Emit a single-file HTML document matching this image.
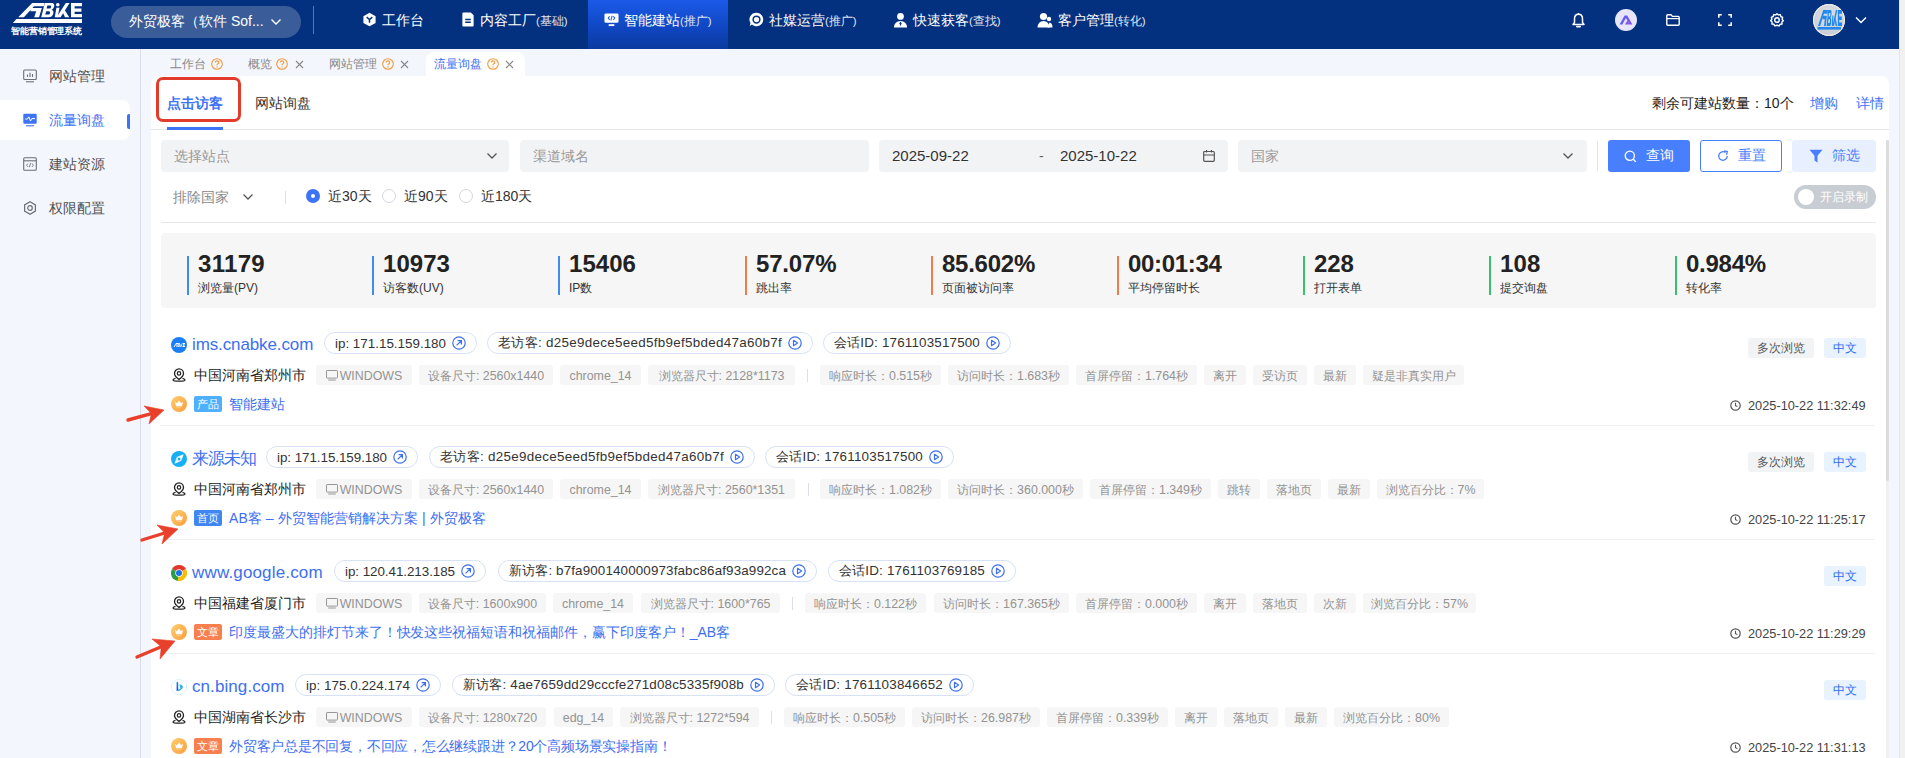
<!DOCTYPE html><html><head><meta charset='utf-8'><style>
*{box-sizing:border-box;margin:0;padding:0}
html,body{width:1905px;height:758px;overflow:hidden;background:#f3f6fd;font-family:"Liberation Sans", sans-serif;}
.ab{position:absolute;white-space:nowrap}
.hdr{position:absolute;left:0;top:0;width:1899px;height:49px;background:#03317f}
.sb{position:absolute;left:0;top:49px;width:141px;height:709px;background:#f3f6fd;border-right:1px solid #d9dce9}
.card{position:absolute;left:151px;top:76px;width:1738px;height:700px;background:#fff;border-radius:8px 8px 0 0}
.tc{display:flex;align-items:center;justify-content:center}
.tag{position:absolute;height:20px;padding-top:2px;background:#f6f6f6;border-radius:3px;color:#939393;font-size:12.4px;display:flex;align-items:center;justify-content:center;white-space:nowrap}
.chip{position:absolute;height:22px;border:1px solid #d8e2f6;border-radius:11px;color:#333;font-size:13.4px;display:flex;align-items:center;white-space:nowrap;padding-left:10px}
.dv{position:absolute;width:1px;background:#dcdfe6}
</style></head><body>
<div class='hdr'></div>
<svg class='ab' style='left:0;top:0' width='90' height='40' viewBox='0 0 90 40'>
<g fill='#fff'>
<path d='M18.2 17.2 L32.2 2.9 L44.6 2.9 L43.7 6.2 L34 6.2 L23.9 17.2 Z'/>
<path d='M31.5 8 L41.9 8 L39 17.2 L34.2 17.2 L36.2 11.2 L30.2 11.2 Z'/>
<path fill-rule='evenodd' d='M44.8 2.9 L51.5 2.9 C54.5 2.9 54.8 5.5 53.8 7.5 C53.3 8.6 52.6 9.4 51.6 9.8 C53.6 10.4 53.8 12.6 53 14.5 C52 16.6 50.6 17.2 48.5 17.2 L41.2 17.2 Z M47.4 5.6 L46.6 8.6 L50 8.6 C51.3 8.6 51.6 5.6 50.3 5.6 Z M46.3 11.2 L45.2 14.6 L48.7 14.6 C50.2 14.6 50.6 11.2 49 11.2 Z'/>
<circle cx='57.8' cy='4.7' r='1.8'/>
<path d='M56.4 7.8 L59.5 7.8 L57.6 17.2 L54.8 17.2 Z'/>
<path d='M65.8 2.9 L69.6 2.9 L60.6 17.2 L56.6 17.2 Z'/>
<path d='M62.6 12 L64.4 9.6 L69.2 17.2 L65 17.2 Z'/>
<path d='M71 2.9 L82 2.9 L82 6.3 L74.6 6.3 L74.6 8.6 L81.4 8.6 L81.4 11.8 L74.6 11.8 L74.6 14 L82 14 L82 17.2 L71 17.2 Z'/>
<path d='M16.4 19 L82 19 L82 23 L12.9 23 Z'/>
</g>
<text x='10.8' y='34.4' fill='#fff' font-size='9' font-weight='bold' font-family='Liberation Sans, sans-serif' textLength='71.5' lengthAdjust='spacingAndGlyphs'>智能营销管理系统</text>
</svg>
<div class='ab tc' style='left:111px;top:6px;width:190px;height:32px;border-radius:16px;background:#3a5c99;color:#fff;font-size:14px;justify-content:flex-start;padding-left:18px'>外贸极客（软件 Sof...<svg style='margin-left:6px' width='12' height='8' viewBox='0 0 12 8'><path d='M1.5 1.5 L6 6 L10.5 1.5' stroke='#fff' stroke-width='1.4' fill='none'/></svg></div>
<div class='ab' style='left:313px;top:6px;width:1px;height:28px;background:#5a77aa'></div>
<div class='ab' style='left:588px;top:0;width:140px;height:49px;background:linear-gradient(180deg,#1b5ae8 0%,#0f45bf 60%,#0a3a9e 100%)'></div>
<div class='ab' style='left:362px;top:12px;height:16px;display:flex;align-items:center;color:#fff;font-size:14px'><span style='position:relative;top:-0.5px;line-height:0'><svg width='15' height='15' viewBox='0 0 16 16'><path d='M8 0.8 L14.5 4.4 V11.6 L8 15.2 L1.5 11.6 V4.4 Z' fill='#fff'/><path d='M5 5.5 L8 8 L11 5.5 M8 8 V11.5' stroke='#03317f' stroke-width='1.6' fill='none'/></svg></span><span style='margin-left:5px;position:relative;top:1px'>工作台</span><span style='font-size:11.5px;color:#e0e6f2;position:relative;top:1px'></span></div>
<div class='ab' style='left:461px;top:12px;height:16px;display:flex;align-items:center;color:#fff;font-size:14px'><span style='position:relative;top:-0.5px;line-height:0'><svg width='14' height='15' viewBox='0 0 14 16'><path d='M1 1.5 Q1 0.5 2 0.5 H10 L13 3.5 V14.5 Q13 15.5 12 15.5 H2 Q1 15.5 1 14.5 Z' fill='#fff'/><path d='M4 8 H10 M4 11 H10' stroke='#03317f' stroke-width='1.5'/></svg></span><span style='margin-left:5px;position:relative;top:1px'>内容工厂</span><span style='font-size:11.5px;color:#e0e6f2;position:relative;top:1px'>(基础)</span></div>
<div class='ab' style='left:604px;top:12px;height:16px;display:flex;align-items:center;color:#fff;font-size:14px'><span style='position:relative;top:-0.5px;line-height:0'><svg width='15' height='15' viewBox='0 0 16 16'><rect x='0.5' y='1.5' width='15' height='10' rx='1.5' fill='#fff'/><rect x='5' y='13' width='6' height='2' fill='#fff'/><path d='M6 4.5 L4.5 6.5 L6 8.5 M10 4.5 L11.5 6.5 L10 8.5 M8.7 4 L7.3 9' stroke='#1a55e0' stroke-width='1.1' fill='none'/></svg></span><span style='margin-left:5px;position:relative;top:1px'>智能建站</span><span style='font-size:11.5px;color:#e0e6f2;position:relative;top:1px'>(推广)</span></div>
<div class='ab' style='left:749px;top:12px;height:16px;display:flex;align-items:center;color:#fff;font-size:14px'><span style='position:relative;top:-0.5px;line-height:0'><svg width='15' height='15' viewBox='0 0 16 16'><path d='M8 0.8 A7.2 7.2 0 1 1 3.2 13.4 L0.8 15 L1.6 11.8 A7.2 7.2 0 0 1 8 0.8 Z' fill='#fff'/><circle cx='8' cy='8' r='3.6' fill='none' stroke='#03317f' stroke-width='1.6'/></svg></span><span style='margin-left:5px;position:relative;top:1px'>社媒运营</span><span style='font-size:11.5px;color:#e0e6f2;position:relative;top:1px'>(推广)</span></div>
<div class='ab' style='left:893px;top:12px;height:16px;display:flex;align-items:center;color:#fff;font-size:14px'><span style='position:relative;top:-0.5px;line-height:0'><svg width='15' height='16' viewBox='0 0 16 16'><circle cx='8' cy='4.2' r='3.6' fill='#fff'/><path d='M1 16 Q1.5 9 8 9 Q14.5 9 15 16 Z' fill='#fff'/><path d='M8 9.5 L7 11.5 L8 15 L9 11.5 Z' fill='#03317f'/></svg></span><span style='margin-left:5px;position:relative;top:1px'>快速获客</span><span style='font-size:11.5px;color:#e0e6f2;position:relative;top:1px'>(查找)</span></div>
<div class='ab' style='left:1037px;top:12px;height:16px;display:flex;align-items:center;color:#fff;font-size:14px'><span style='position:relative;top:-0.5px;line-height:0'><svg width='16' height='16' viewBox='0 0 16 16'><circle cx='6.5' cy='4.5' r='3.6' fill='#fff'/><path d='M0.5 15.5 Q1 9 6.5 9 Q12 9 12.5 15.5 Z' fill='#fff'/><circle cx='12' cy='7' r='2.2' fill='#fff'/><path d='M10.5 15.5 L15.5 15.5 Q15.5 11 12.5 10.5 Z' fill='#fff'/></svg></span><span style='margin-left:5px;position:relative;top:1px'>客户管理</span><span style='font-size:11.5px;color:#e0e6f2;position:relative;top:1px'>(转化)</span></div>
<svg class='ab' style='left:1571px;top:12px' width='15' height='16' viewBox='0 0 15 16'><path d='M7.5 2.2 C5 2.2 3.5 4.2 3.5 6.8 V10.6 L2 12.4 H13 L11.5 10.6 V6.8 C11.5 4.2 10 2.2 7.5 2.2 Z' fill='none' stroke='#fff' stroke-width='1.5' stroke-linejoin='round'/><path d='M7.5 1 V2.2' stroke='#fff' stroke-width='1.4'/><path d='M5.8 14.6 H9.2' stroke='#fff' stroke-width='1.6' stroke-linecap='round'/></svg>
<div class='ab' style='left:1615px;top:9px;width:22px;height:22px;border-radius:11px;background:#e8e4fa'></div>
<svg class='ab' style='left:1615px;top:9px' width='22' height='22' viewBox='0 0 22 22'><defs><linearGradient id='aig' x1='0' y1='0' x2='1' y2='0'><stop offset='0' stop-color='#4f63f2'/><stop offset='1' stop-color='#8a52ec'/></linearGradient></defs><path d='M4.6 15.4 L9.6 6.6 L12.2 6.6 L17.4 15.4 L14.6 15.4 L10.9 9 L7.3 15.4 Z' fill='url(#aig)'/><path d='M10 15.4 L12.4 11.4 L14.6 15.4 Z' fill='#7c55ee'/></svg>
<svg class='ab' style='left:1666px;top:14px' width='14' height='12' viewBox='0 0 14 12'><path d='M0.8 1.8 Q0.8 0.8 1.8 0.8 H5 L6.4 2.4 H12.2 Q13.2 2.4 13.2 3.4 V10.2 Q13.2 11.2 12.2 11.2 H1.8 Q0.8 11.2 0.8 10.2 Z' fill='none' stroke='#fff' stroke-width='1.4' stroke-linejoin='round'/><path d='M0.8 4.6 H13.2' stroke='#fff' stroke-width='1.2'/></svg>
<svg class='ab' style='left:1718px;top:14px' width='14' height='12' viewBox='0 0 14 12'><path d='M0.8 3.8 V0.8 H3.8 M10.2 0.8 H13.2 V3.8 M13.2 8.2 V11.2 H10.2 M3.8 11.2 H0.8 V8.2' fill='none' stroke='#fff' stroke-width='1.5'/></svg>
<svg class='ab' style='left:1770px;top:13px' width='14' height='14' viewBox='0 0 16 16'><path d='M8 0.8 L9.6 2.2 L11.8 1.8 L12.4 4 L14.5 5 L13.8 7.1 L15.2 8.8 L13.6 10.3 L13.8 12.6 L11.6 12.9 L10.4 14.8 L8 14 L5.6 14.8 L4.4 12.9 L2.2 12.6 L2.4 10.3 L0.8 8.8 L2.2 7.1 L1.5 5 L3.6 4 L4.2 1.8 L6.4 2.2 Z' fill='none' stroke='#fff' stroke-width='1.6' stroke-linejoin='round'/><circle cx='8' cy='8' r='2.6' fill='none' stroke='#fff' stroke-width='1.7'/></svg>
<div class='ab' style='left:1813px;top:4px;width:32px;height:32px;border-radius:16px;background:radial-gradient(circle at 50% 40%,#dfe1e5 0%,#ccd0d6 65%,#b4b8bf 100%);box-shadow:inset 0 0 0 1.2px #efeceb;overflow:hidden'><svg width='32' height='32' viewBox='0 0 32 32'><g fill='#2188f0' transform='translate(-1.84 2.75) scale(0.376 1.12)'><path d='M18.2 17.2 L32.2 2.9 L44.6 2.9 L43.7 6.2 L34 6.2 L23.9 17.2 Z'/>
<path d='M31.5 8 L41.9 8 L39 17.2 L34.2 17.2 L36.2 11.2 L30.2 11.2 Z'/>
<path fill-rule='evenodd' d='M44.8 2.9 L51.5 2.9 C54.5 2.9 54.8 5.5 53.8 7.5 C53.3 8.6 52.6 9.4 51.6 9.8 C53.6 10.4 53.8 12.6 53 14.5 C52 16.6 50.6 17.2 48.5 17.2 L41.2 17.2 Z M47.4 5.6 L46.6 8.6 L50 8.6 C51.3 8.6 51.6 5.6 50.3 5.6 Z M46.3 11.2 L45.2 14.6 L48.7 14.6 C50.2 14.6 50.6 11.2 49 11.2 Z'/>
<path d='M56.4 7.8 L59.5 7.8 L57.6 17.2 L54.8 17.2 Z'/>
<path d='M65.8 2.9 L69.6 2.9 L60.6 17.2 L56.6 17.2 Z'/>
<path d='M62.6 12 L64.4 9.6 L69.2 17.2 L65 17.2 Z'/>
<path d='M71 2.9 L82 2.9 L82 6.3 L74.6 6.3 L74.6 8.6 L81.4 8.6 L81.4 11.8 L74.6 11.8 L74.6 14 L82 14 L82 17.2 L71 17.2 Z'/></g><rect x='4.5' y='23' width='23.5' height='2.6' fill='#2188f0'/></svg></div>
<svg class='ab' style='left:1855px;top:16px' width='12' height='8' viewBox='0 0 12 8'><path d='M1 1.5 L6 6.5 L11 1.5' stroke='#fff' stroke-width='1.5' fill='none'/></svg>
<div class='ab' style='left:1899px;top:0;width:6px;height:758px;background:#f1f1f1;border-left:1px solid #e6e6e6'></div>
<div class='sb'></div>
<div class='ab' style='left:0;top:100px;width:130px;height:40px;background:#fff;border-radius:0 8px 8px 0'></div>
<div class='ab' style='left:127px;top:114px;width:3px;height:15px;background:#3d73f5;border-radius:2px 0 0 2px'></div>
<div class='ab' style='left:23px;top:69px;height:14px'><svg width='14' height='14' viewBox='0 0 14 14'><rect x='0.7' y='1' width='12.6' height='9.5' rx='1' fill='none' stroke='#6b6f78' stroke-width='1.1'/><path d='M3 12.8 H11' stroke='#6b6f78' stroke-width='1.1'/><path d='M4.5 8 V5.5 M7 8 V3.8 M9.5 8 V5' stroke='#6b6f78' stroke-width='1.1'/></svg></div>
<div class='ab' style='left:49px;top:66px;height:20px;line-height:20px;font-size:14px;color:#505050'>网站管理</div>
<div class='ab' style='left:23px;top:113px;height:14px'><svg width='14' height='14' viewBox='0 0 14 14'><rect x='0.3' y='0.8' width='13.4' height='10' rx='1' fill='#3d73f5'/><path d='M2 6 H4.5 L5.8 3.8 L7.5 8 L8.8 5.6 H12' stroke='#fff' stroke-width='1' fill='none'/><path d='M3 12.8 H11' stroke='#3d73f5' stroke-width='1.1'/></svg></div>
<div class='ab' style='left:49px;top:110px;height:20px;line-height:20px;font-size:14px;color:#3d73f5'>流量询盘</div>
<div class='ab' style='left:23px;top:157px;height:14px'><svg width='14' height='14' viewBox='0 0 14 14'><rect x='0.7' y='0.7' width='12.6' height='12.6' rx='1' fill='none' stroke='#6b6f78' stroke-width='1.1'/><path d='M0.7 3.8 H13.3' stroke='#6b6f78' stroke-width='1.1'/><path d='M5 6.5 L3.6 8.2 L5 9.9 M9 6.5 L10.4 8.2 L9 9.9 M7.6 6.2 L6.4 10.2' stroke='#6b6f78' stroke-width='0.9' fill='none'/></svg></div>
<div class='ab' style='left:49px;top:154px;height:20px;line-height:20px;font-size:14px;color:#505050'>建站资源</div>
<div class='ab' style='left:23px;top:201px;height:14px'><svg width='14' height='14' viewBox='0 0 14 14'><path d='M7 0.8 L12.4 3.9 V10.1 L7 13.2 L1.6 10.1 V3.9 Z' fill='none' stroke='#6b6f78' stroke-width='1.2'/><circle cx='7' cy='7' r='2.3' fill='none' stroke='#6b6f78' stroke-width='1.2'/></svg></div>
<div class='ab' style='left:49px;top:198px;height:20px;line-height:20px;font-size:14px;color:#505050'>权限配置</div>
<div class='ab' style='left:426px;top:52px;width:99px;height:26px;background:#fff;border-radius:8px 8px 0 0'></div>
<div class='ab' style='left:170px;top:56px;height:16px;line-height:16px;font-size:12px;color:#888'>工作台</div>
<svg class='ab' style='left:211px;top:58px' width='12' height='12' viewBox='0 0 12 12'><circle cx='6' cy='6' r='5.3' fill='none' stroke='#f39a3c' stroke-width='1.1'/><path d='M4.3 4.6 Q4.3 2.9 6 2.9 Q7.7 2.9 7.7 4.4 Q7.7 5.4 6.6 5.9 Q6 6.2 6 7.2' fill='none' stroke='#f39a3c' stroke-width='1.1'/><circle cx='6' cy='8.9' r='0.7' fill='#f39a3c'/></svg>
<div class='ab' style='left:248px;top:56px;height:16px;line-height:16px;font-size:12px;color:#888'>概览</div>
<svg class='ab' style='left:276px;top:58px' width='12' height='12' viewBox='0 0 12 12'><circle cx='6' cy='6' r='5.3' fill='none' stroke='#f39a3c' stroke-width='1.1'/><path d='M4.3 4.6 Q4.3 2.9 6 2.9 Q7.7 2.9 7.7 4.4 Q7.7 5.4 6.6 5.9 Q6 6.2 6 7.2' fill='none' stroke='#f39a3c' stroke-width='1.1'/><circle cx='6' cy='8.9' r='0.7' fill='#f39a3c'/></svg>
<svg class='ab' style='left:295px;top:60px' width='9' height='9' viewBox='0 0 9 9'><path d='M1 1 L8 8 M8 1 L1 8' stroke='#888' stroke-width='1.1'/></svg>
<div class='ab' style='left:329px;top:56px;height:16px;line-height:16px;font-size:12px;color:#888'>网站管理</div>
<svg class='ab' style='left:382px;top:58px' width='12' height='12' viewBox='0 0 12 12'><circle cx='6' cy='6' r='5.3' fill='none' stroke='#f39a3c' stroke-width='1.1'/><path d='M4.3 4.6 Q4.3 2.9 6 2.9 Q7.7 2.9 7.7 4.4 Q7.7 5.4 6.6 5.9 Q6 6.2 6 7.2' fill='none' stroke='#f39a3c' stroke-width='1.1'/><circle cx='6' cy='8.9' r='0.7' fill='#f39a3c'/></svg>
<svg class='ab' style='left:400px;top:60px' width='9' height='9' viewBox='0 0 9 9'><path d='M1 1 L8 8 M8 1 L1 8' stroke='#888' stroke-width='1.1'/></svg>
<div class='ab' style='left:434px;top:56px;height:16px;line-height:16px;font-size:12px;color:#3d73f5'>流量询盘</div>
<svg class='ab' style='left:487px;top:58px' width='12' height='12' viewBox='0 0 12 12'><circle cx='6' cy='6' r='5.3' fill='none' stroke='#f39a3c' stroke-width='1.1'/><path d='M4.3 4.6 Q4.3 2.9 6 2.9 Q7.7 2.9 7.7 4.4 Q7.7 5.4 6.6 5.9 Q6 6.2 6 7.2' fill='none' stroke='#f39a3c' stroke-width='1.1'/><circle cx='6' cy='8.9' r='0.7' fill='#f39a3c'/></svg>
<svg class='ab' style='left:505px;top:60px' width='9' height='9' viewBox='0 0 9 9'><path d='M1 1 L8 8 M8 1 L1 8' stroke='#888' stroke-width='1.1'/></svg>
<div class='card'></div>
<div class='ab' style='left:156px;top:77px;width:85px;height:45px;border:3px solid #e33b2b;border-radius:7px'></div>
<div class='ab' style='left:167px;top:93px;height:20px;line-height:20px;font-size:14px;color:#3d73f5;font-weight:bold'>点击访客</div>
<div class='ab' style='left:255px;top:93px;height:20px;line-height:20px;font-size:14px;color:#333'>网站询盘</div>
<div class='ab' style='left:151px;top:129px;width:1738px;height:1px;background:#e6e8ee'></div>
<div class='ab' style='left:167px;top:127px;width:56px;height:3px;background:#3d73f5'></div>
<div class='ab' style='left:1652px;top:93px;height:20px;line-height:20px;font-size:14px;color:#222'>剩余可建站数量：10个</div>
<div class='ab' style='left:1810px;top:93px;height:20px;line-height:20px;font-size:14px;color:#3d73f5'>增购</div>
<div class='ab' style='left:1856px;top:93px;height:20px;line-height:20px;font-size:14px;color:#3d73f5'>详情</div>
<div class='ab' style='left:161px;top:140px;width:348px;height:32px;background:#f2f3f5;border-radius:4px'></div>
<div class='ab' style='left:174px;top:146px;height:20px;line-height:20px;font-size:14px;color:#999'>选择站点</div>
<div class='ab' style='left:486px;top:152px;height:8px;line-height:0'><svg width='12' height='8' viewBox='0 0 12 8'><path d='M1.5 1.5 L6 6 L10.5 1.5' stroke='#555' stroke-width='1.3' fill='none'/></svg></div>
<div class='ab' style='left:520px;top:140px;width:349px;height:32px;background:#f2f3f5;border-radius:4px'></div>
<div class='ab' style='left:533px;top:146px;height:20px;line-height:20px;font-size:14px;color:#999'>渠道域名</div>
<div class='ab' style='left:879px;top:140px;width:349px;height:32px;background:#f2f3f5;border-radius:4px'></div>
<div class='ab' style='left:892px;top:146px;height:20px;line-height:20px;font-size:15px;color:#333'>2025-09-22</div>
<div class='ab' style='left:1039px;top:146px;height:20px;line-height:20px;font-size:14px;color:#666'>-</div>
<div class='ab' style='left:1060px;top:146px;height:20px;line-height:20px;font-size:15px;color:#333'>2025-10-22</div>
<svg class='ab' style='left:1203px;top:150px' width='12' height='12' viewBox='0 0 12 12'><rect x='0.7' y='1.5' width='10.6' height='9.8' rx='1' fill='none' stroke='#555' stroke-width='1.2'/><path d='M0.7 5 H11.3 M3.5 0 V2.5 M8.5 0 V2.5' stroke='#555' stroke-width='1.2'/></svg>
<div class='ab' style='left:1238px;top:140px;width:349px;height:32px;background:#f2f3f5;border-radius:4px'></div>
<div class='ab' style='left:1251px;top:146px;height:20px;line-height:20px;font-size:14px;color:#999'>国家</div>
<div class='ab' style='left:1562px;top:152px;height:8px;line-height:0'><svg width='12' height='8' viewBox='0 0 12 8'><path d='M1.5 1.5 L6 6 L10.5 1.5' stroke='#555' stroke-width='1.3' fill='none'/></svg></div>
<div class='ab' style='left:1597px;top:141px;width:1px;height:30px;background:#e2e4ea'></div>
<div class='ab tc' style='left:1608px;top:140px;width:82px;height:32px;background:#487ffe;border-radius:3px;color:#fff;font-size:14px'><svg width='13' height='13' viewBox='0 0 13 13' style='margin-right:9px'><circle cx='5.8' cy='5.8' r='4.6' fill='none' stroke='#fff' stroke-width='1.3'/><path d='M9.2 9.2 L11.8 11.8' stroke='#fff' stroke-width='1.4'/></svg>查询</div>
<div class='ab tc' style='left:1700px;top:140px;width:82px;height:32px;background:#fff;border:1px solid #487ffe;border-radius:3px;color:#487ffe;font-size:14px'><svg width='12' height='12' viewBox='0 0 12 12' style='margin-right:9px'><path d='M10.3 6 A4.3 4.3 0 1 1 8.6 2.6' fill='none' stroke='#487ffe' stroke-width='1.3'/><path d='M7 0.8 L10.3 1.6 L9.5 4.8' fill='none' stroke='#487ffe' stroke-width='1.3'/></svg>重置</div>
<div class='ab tc' style='left:1792px;top:140px;width:84px;height:32px;background:#e8efff;border-radius:3px;color:#487ffe;font-size:14px'><svg width='14' height='14' viewBox='0 0 14 14' style='margin-right:9px'><path d='M0.5 0.8 H13.5 L8.5 6.8 V13.5 L5.5 11.5 V6.8 Z' fill='#487ffe'/></svg>筛选</div>
<div class='ab' style='left:173px;top:187px;height:20px;line-height:20px;font-size:14px;color:#888'>排除国家</div>
<div class='ab' style='left:242px;top:193px;height:8px;line-height:0'><svg width='12' height='8' viewBox='0 0 12 8'><path d='M1.5 1.5 L6 6 L10.5 1.5' stroke='#555' stroke-width='1.3' fill='none'/></svg></div>
<div class='ab' style='left:285px;top:191px;width:1px;height:13px;background:#dcdfe6'></div>
<div class='ab' style='left:306px;top:189px;width:14px;height:14px;border-radius:7px;background:#3d73f5'></div><div class='ab' style='left:311px;top:194px;width:4px;height:4px;border-radius:2px;background:#fff'></div>
<div class='ab' style='left:328px;top:186px;height:20px;line-height:20px;font-size:14px;color:#333'>近30天</div>
<div class='ab' style='left:382px;top:189px;width:14px;height:14px;border-radius:7px;border:1px solid #d4d7de'></div>
<div class='ab' style='left:404px;top:186px;height:20px;line-height:20px;font-size:14px;color:#333'>近90天</div>
<div class='ab' style='left:459px;top:189px;width:14px;height:14px;border-radius:7px;border:1px solid #d4d7de'></div>
<div class='ab' style='left:481px;top:186px;height:20px;line-height:20px;font-size:14px;color:#333'>近180天</div>
<div class='ab' style='left:1794px;top:185px;width:82px;height:24px;border-radius:12px;background:#c8ccd3'></div>
<div class='ab' style='left:1798px;top:189px;width:16px;height:16px;border-radius:8px;background:#fff'></div>
<div class='ab' style='left:1820px;top:187px;height:20px;line-height:20px;font-size:12px;color:#fff'>开启录制</div>
<div class='ab' style='left:161px;top:222px;width:1715px;height:1px;background:#e6e8ee'></div>
<div class='ab' style='left:1886px;top:140px;width:3px;height:618px;background:#f0f0f0'></div>
<div class='ab' style='left:1886px;top:140px;width:3px;height:341px;background:#dcdcdc;border-radius:2px'></div>
<div class='ab' style='left:161px;top:233px;width:1715px;height:75px;background:#f6f6f6;border-radius:4px'></div>
<div class='ab' style='left:187px;top:256px;width:2px;height:39px;background:#3f8cf0'></div>
<div class='ab' style='left:198px;top:250px;height:28px;line-height:28px;font-size:24px;font-weight:bold;color:#222'><span style='letter-spacing:0.316px;'>31179</span></div>
<div class='ab' style='left:198px;top:280px;height:16px;line-height:16px;font-size:12px;color:#333'>浏览量(PV)</div>
<div class='ab' style='left:372px;top:256px;width:2px;height:39px;background:#3f8cf0'></div>
<div class='ab' style='left:383px;top:250px;height:28px;line-height:28px;font-size:24px;font-weight:bold;color:#222'><span style='letter-spacing:0.030px;'>10973</span></div>
<div class='ab' style='left:383px;top:280px;height:16px;line-height:16px;font-size:12px;color:#333'>访客数(UV)</div>
<div class='ab' style='left:558px;top:256px;width:2px;height:39px;background:#3f8cf0'></div>
<div class='ab' style='left:569px;top:250px;height:28px;line-height:28px;font-size:24px;font-weight:bold;color:#222'><span style='letter-spacing:0.030px;'>15406</span></div>
<div class='ab' style='left:569px;top:280px;height:16px;line-height:16px;font-size:12px;color:#333'>IP数</div>
<div class='ab' style='left:745px;top:256px;width:2px;height:39px;background:#f07b4b'></div>
<div class='ab' style='left:756px;top:250px;height:28px;line-height:28px;font-size:24px;font-weight:bold;color:#222'><span style='letter-spacing:-0.184px;'>57.07%</span></div>
<div class='ab' style='left:756px;top:280px;height:16px;line-height:16px;font-size:12px;color:#333'>跳出率</div>
<div class='ab' style='left:931px;top:256px;width:2px;height:39px;background:#f07b4b'></div>
<div class='ab' style='left:942px;top:250px;height:28px;line-height:28px;font-size:24px;font-weight:bold;color:#222'><span style='letter-spacing:-0.250px;'>85.602%</span></div>
<div class='ab' style='left:942px;top:280px;height:16px;line-height:16px;font-size:12px;color:#333'>页面被访问率</div>
<div class='ab' style='left:1117px;top:256px;width:2px;height:39px;background:#f07b4b'></div>
<div class='ab' style='left:1128px;top:250px;height:28px;line-height:28px;font-size:24px;font-weight:bold;color:#222'><span style='letter-spacing:-0.310px;'>00:01:34</span></div>
<div class='ab' style='left:1128px;top:280px;height:16px;line-height:16px;font-size:12px;color:#333'>平均停留时长</div>
<div class='ab' style='left:1303px;top:256px;width:2px;height:39px;background:#39c06e'></div>
<div class='ab' style='left:1314px;top:250px;height:28px;line-height:28px;font-size:24px;font-weight:bold;color:#222'><span style='letter-spacing:-0.049px;'>228</span></div>
<div class='ab' style='left:1314px;top:280px;height:16px;line-height:16px;font-size:12px;color:#333'>打开表单</div>
<div class='ab' style='left:1489px;top:256px;width:2px;height:39px;background:#39c06e'></div>
<div class='ab' style='left:1500px;top:250px;height:28px;line-height:28px;font-size:24px;font-weight:bold;color:#222'><span style='letter-spacing:0.118px;'>108</span></div>
<div class='ab' style='left:1500px;top:280px;height:16px;line-height:16px;font-size:12px;color:#333'>提交询盘</div>
<div class='ab' style='left:1675px;top:256px;width:2px;height:39px;background:#39c06e'></div>
<div class='ab' style='left:1686px;top:250px;height:28px;line-height:28px;font-size:24px;font-weight:bold;color:#222'><span style='letter-spacing:-0.268px;'>0.984%</span></div>
<div class='ab' style='left:1686px;top:280px;height:16px;line-height:16px;font-size:12px;color:#333'>转化率</div>
<div class='ab' style='left:171px;top:337px;height:16px;line-height:0'><svg width='16' height='16' viewBox='0 0 16 16'><circle cx='8' cy='8' r='8' fill='#1a7ef5'/><g fill='#fff' transform='translate(-0.78 5.19) scale(0.18 0.28)'><path d='M18.2 17.2 L32.2 2.9 L44.6 2.9 L43.7 6.2 L34 6.2 L23.9 17.2 Z'/>
<path d='M31.5 8 L41.9 8 L39 17.2 L34.2 17.2 L36.2 11.2 L30.2 11.2 Z'/>
<path fill-rule='evenodd' d='M44.8 2.9 L51.5 2.9 C54.5 2.9 54.8 5.5 53.8 7.5 C53.3 8.6 52.6 9.4 51.6 9.8 C53.6 10.4 53.8 12.6 53 14.5 C52 16.6 50.6 17.2 48.5 17.2 L41.2 17.2 Z M47.4 5.6 L46.6 8.6 L50 8.6 C51.3 8.6 51.6 5.6 50.3 5.6 Z M46.3 11.2 L45.2 14.6 L48.7 14.6 C50.2 14.6 50.6 11.2 49 11.2 Z'/>
<path d='M56.4 7.8 L59.5 7.8 L57.6 17.2 L54.8 17.2 Z'/>
<path d='M65.8 2.9 L69.6 2.9 L60.6 17.2 L56.6 17.2 Z'/>
<path d='M62.6 12 L64.4 9.6 L69.2 17.2 L65 17.2 Z'/>
<path d='M71 2.9 L82 2.9 L82 6.3 L74.6 6.3 L74.6 8.6 L81.4 8.6 L81.4 11.8 L74.6 11.8 L74.6 14 L82 14 L82 17.2 L71 17.2 Z'/></g></svg></div>
<div class='ab' style='left:192px;top:333px;height:24px;line-height:24px;font-size:17px;color:#3d6ff0'><span style='letter-spacing:-0.116px;'>ims.cnabke.com</span></div>
<div class='chip' style='left:324px;top:332px;width:153px'><span style='letter-spacing:0.003px;'>ip: 171.15.159.180</span></div>
<svg class='ab' style='left:452px;top:336px' width='14' height='14' viewBox='0 0 14 14'><circle cx='7' cy='7' r='6.2' fill='none' stroke='#3d6ff0' stroke-width='1.2'/><path d='M4.6 9.4 L9.2 4.8 M5.6 4.6 H9.4 V8.4' fill='none' stroke='#3d6ff0' stroke-width='1.2'/></svg>
<div class='chip' style='left:487px;top:332px;width:326px'><span style='letter-spacing:0.302px;'>老访客: d25e9dece5eed5fb9ef5bded47a60b7f</span></div>
<svg class='ab' style='left:788px;top:336px' width='14' height='14' viewBox='0 0 14 14'><circle cx='7' cy='7' r='6.2' fill='none' stroke='#3d6ff0' stroke-width='1.2'/><path d='M5.5 4.3 L9.6 7 L5.5 9.7 Z' fill='none' stroke='#3d6ff0' stroke-width='1.2' stroke-linejoin='round'/></svg>
<div class='chip' style='left:823px;top:332px;width:188px'><span style='letter-spacing:0.176px;'>会话ID: 1761103517500</span></div>
<svg class='ab' style='left:986px;top:336px' width='14' height='14' viewBox='0 0 14 14'><circle cx='7' cy='7' r='6.2' fill='none' stroke='#3d6ff0' stroke-width='1.2'/><path d='M5.5 4.3 L9.6 7 L5.5 9.7 Z' fill='none' stroke='#3d6ff0' stroke-width='1.2' stroke-linejoin='round'/></svg>
<div class='ab' style='left:172px;top:368px;height:14px;line-height:0'><svg width='14' height='14' viewBox='0 0 14 14'><path d='M7 0.9 A4.5 4.5 0 0 1 11.5 5.4 C11.5 8 9 10 7 11.4 C5 10 2.5 8 2.5 5.4 A4.5 4.5 0 0 1 7 0.9 Z' fill='none' stroke='#222' stroke-width='1.3'/><circle cx='7' cy='5.4' r='1.7' fill='none' stroke='#222' stroke-width='1.2'/><path d='M3.5 10.3 C1.5 10.9 1 11.5 1 12 C1 12.8 3.8 13.2 7 13.2 C10.2 13.2 13 12.8 13 12 C13 11.5 12.5 10.9 10.5 10.3' fill='none' stroke='#222' stroke-width='1.3'/></svg></div>
<div class='ab' style='left:194px;top:365px;height:20px;line-height:20px;font-size:14px;color:#222'>中国河南省郑州市</div>
<div class='tag' style='left:316px;top:365px;width:96px'><svg width='12' height='11' viewBox='0 0 12 11' style='margin-right:2px;margin-top:-1px'><rect x='0.5' y='0.5' width='11' height='7.6' rx='0.6' fill='none' stroke='#8c8c8c' stroke-width='0.9'/><path d='M2.2 10 H9.8' stroke='#8c8c8c' stroke-width='0.9'/></svg>WINDOWS</div>
<div class='tag' style='left:419px;top:365px;width:134px'>设备尺寸: 2560x1440</div>
<div class='tag' style='left:560px;top:365px;width:81px'>chrome_14</div>
<div class='tag' style='left:648px;top:365px;width:147px'>浏览器尺寸: 2128*1173</div>
<div class='dv' style='left:807px;top:369px;height:13px'></div>
<div class='tag' style='left:820px;top:365px;width:121px'>响应时长：0.515秒</div>
<div class='tag' style='left:948px;top:365px;width:121px'>访问时长：1.683秒</div>
<div class='tag' style='left:1076px;top:365px;width:121px'>首屏停留：1.764秒</div>
<div class='tag' style='left:1204px;top:365px;width:42px'>离开</div>
<div class='tag' style='left:1253px;top:365px;width:54px'>受访页</div>
<div class='tag' style='left:1314px;top:365px;width:42px'>最新</div>
<div class='tag' style='left:1363px;top:365px;width:101px'>疑是非真实用户</div>
<div class='ab' style='left:171px;top:396px;height:16px;line-height:0'><svg width='16' height='16' viewBox='0 0 16 16'><defs><linearGradient id='cg' x1='0' y1='0' x2='1' y2='1'><stop offset='0' stop-color='#ffcf6e'/><stop offset='1' stop-color='#fb9b3a'/></linearGradient></defs><circle cx='8' cy='8' r='8' fill='url(#cg)'/><path d='M4 5.8 L6 7.3 L8 4.4 L10 7.3 L12 5.8 L11 10.3 H5 Z' fill='#fff'/><rect x='5.5' y='11.5' width='5' height='0.6' fill='#fff' opacity='0.5'/></svg></div>
<div class='ab tc' style='left:194px;top:396px;width:28px;height:16px;border-radius:2px;background:#4eb0fc;color:#fff;font-size:11px'>产品</div>
<div class='ab' style='left:229px;top:394px;height:20px;line-height:20px;font-size:14px;color:#3d6ff0'><span style='letter-spacing:0.100px;'>智能建站</span></div>
<div class='ab tc' style='left:1748px;top:338px;width:66px;height:20px;border-radius:3px;background:#f2f3f5;color:#555;font-size:12px'>多次浏览</div>
<div class='ab tc' style='left:1824px;top:338px;width:42px;height:20px;border-radius:3px;background:#e8f3ff;color:#2f6ef0;font-size:12px'>中文</div>
<div class='ab' style='left:1730px;top:400px;height:11px;line-height:0'><svg width='11' height='11' viewBox='0 0 11 11'><circle cx='5.5' cy='5.5' r='4.7' fill='none' stroke='#555' stroke-width='1.2'/><path d='M5.5 2.8 V5.7 L7.4 6.6' fill='none' stroke='#555' stroke-width='1.1'/></svg></div>
<div class='ab' style='left:1748px;top:397px;height:17px;line-height:17px;font-size:12.75px;color:#444'><span style='letter-spacing:0.008px;'>2025-10-22 11:32:49</span></div>
<div class='ab' style='left:160px;top:425px;width:1715px;height:1px;background:#eef0f3'></div>
<svg class='ab' style='left:0;top:0;overflow:visible' width='1' height='1'><path d='M128 420 L151.4 413.6' stroke='#e8402a' stroke-width='3.4' stroke-linecap='round'/><path d='M164 410 L144 406 L151.4 413.6 L149 424 Z' fill='#e8402a' stroke='#e8402a' stroke-width='0.6' stroke-linejoin='round'/></svg>
<div class='ab' style='left:171px;top:451px;height:16px;line-height:0'><svg width='16' height='16' viewBox='0 0 16 16'><circle cx='8' cy='8' r='8' fill='#17aff5'/><path d='M12.2 3.8 L10 9.6 L4 12.2 L6.1 6.2 Z' fill='#fff' stroke='#fff' stroke-width='0.6' stroke-linejoin='round'/><circle cx='8' cy='8' r='1.5' fill='#17aff5'/></svg></div>
<div class='ab' style='left:192px;top:447px;height:24px;line-height:24px;font-size:17px;color:#3d6ff0'><span style='letter-spacing:-1.100px;'>来源未知</span></div>
<div class='chip' style='left:266px;top:446px;width:152px'><span style='letter-spacing:-0.053px;'>ip: 171.15.159.180</span></div>
<svg class='ab' style='left:393px;top:450px' width='14' height='14' viewBox='0 0 14 14'><circle cx='7' cy='7' r='6.2' fill='none' stroke='#3d6ff0' stroke-width='1.2'/><path d='M4.6 9.4 L9.2 4.8 M5.6 4.6 H9.4 V8.4' fill='none' stroke='#3d6ff0' stroke-width='1.2'/></svg>
<div class='chip' style='left:429px;top:446px;width:326px'><span style='letter-spacing:0.302px;'>老访客: d25e9dece5eed5fb9ef5bded47a60b7f</span></div>
<svg class='ab' style='left:730px;top:450px' width='14' height='14' viewBox='0 0 14 14'><circle cx='7' cy='7' r='6.2' fill='none' stroke='#3d6ff0' stroke-width='1.2'/><path d='M5.5 4.3 L9.6 7 L5.5 9.7 Z' fill='none' stroke='#3d6ff0' stroke-width='1.2' stroke-linejoin='round'/></svg>
<div class='chip' style='left:765px;top:446px;width:189px'><span style='letter-spacing:0.229px;'>会话ID: 1761103517500</span></div>
<svg class='ab' style='left:929px;top:450px' width='14' height='14' viewBox='0 0 14 14'><circle cx='7' cy='7' r='6.2' fill='none' stroke='#3d6ff0' stroke-width='1.2'/><path d='M5.5 4.3 L9.6 7 L5.5 9.7 Z' fill='none' stroke='#3d6ff0' stroke-width='1.2' stroke-linejoin='round'/></svg>
<div class='ab' style='left:172px;top:482px;height:14px;line-height:0'><svg width='14' height='14' viewBox='0 0 14 14'><path d='M7 0.9 A4.5 4.5 0 0 1 11.5 5.4 C11.5 8 9 10 7 11.4 C5 10 2.5 8 2.5 5.4 A4.5 4.5 0 0 1 7 0.9 Z' fill='none' stroke='#222' stroke-width='1.3'/><circle cx='7' cy='5.4' r='1.7' fill='none' stroke='#222' stroke-width='1.2'/><path d='M3.5 10.3 C1.5 10.9 1 11.5 1 12 C1 12.8 3.8 13.2 7 13.2 C10.2 13.2 13 12.8 13 12 C13 11.5 12.5 10.9 10.5 10.3' fill='none' stroke='#222' stroke-width='1.3'/></svg></div>
<div class='ab' style='left:194px;top:479px;height:20px;line-height:20px;font-size:14px;color:#222'>中国河南省郑州市</div>
<div class='tag' style='left:316px;top:479px;width:96px'><svg width='12' height='11' viewBox='0 0 12 11' style='margin-right:2px;margin-top:-1px'><rect x='0.5' y='0.5' width='11' height='7.6' rx='0.6' fill='none' stroke='#8c8c8c' stroke-width='0.9'/><path d='M2.2 10 H9.8' stroke='#8c8c8c' stroke-width='0.9'/></svg>WINDOWS</div>
<div class='tag' style='left:419px;top:479px;width:134px'>设备尺寸: 2560x1440</div>
<div class='tag' style='left:560px;top:479px;width:81px'>chrome_14</div>
<div class='tag' style='left:648px;top:479px;width:147px'>浏览器尺寸: 2560*1351</div>
<div class='dv' style='left:808px;top:483px;height:13px'></div>
<div class='tag' style='left:820px;top:479px;width:121px'>响应时长：1.082秒</div>
<div class='tag' style='left:948px;top:479px;width:135px'>访问时长：360.000秒</div>
<div class='tag' style='left:1090px;top:479px;width:121px'>首屏停留：1.349秒</div>
<div class='tag' style='left:1218px;top:479px;width:42px'>跳转</div>
<div class='tag' style='left:1267px;top:479px;width:54px'>落地页</div>
<div class='tag' style='left:1328px;top:479px;width:42px'>最新</div>
<div class='tag' style='left:1377px;top:479px;width:107px'>浏览百分比：7%</div>
<div class='ab' style='left:171px;top:510px;height:16px;line-height:0'><svg width='16' height='16' viewBox='0 0 16 16'><defs><linearGradient id='cg' x1='0' y1='0' x2='1' y2='1'><stop offset='0' stop-color='#ffcf6e'/><stop offset='1' stop-color='#fb9b3a'/></linearGradient></defs><circle cx='8' cy='8' r='8' fill='url(#cg)'/><path d='M4 5.8 L6 7.3 L8 4.4 L10 7.3 L12 5.8 L11 10.3 H5 Z' fill='#fff'/><rect x='5.5' y='11.5' width='5' height='0.6' fill='#fff' opacity='0.5'/></svg></div>
<div class='ab tc' style='left:194px;top:510px;width:28px;height:16px;border-radius:2px;background:#3f86f2;color:#fff;font-size:11px'>首页</div>
<div class='ab' style='left:229px;top:508px;height:20px;line-height:20px;font-size:14px;color:#3d6ff0'><span style='letter-spacing:0.045px;'>AB客 – 外贸智能营销解决方案 | 外贸极客</span></div>
<div class='ab tc' style='left:1748px;top:452px;width:66px;height:20px;border-radius:3px;background:#f2f3f5;color:#555;font-size:12px'>多次浏览</div>
<div class='ab tc' style='left:1824px;top:452px;width:42px;height:20px;border-radius:3px;background:#e8f3ff;color:#2f6ef0;font-size:12px'>中文</div>
<div class='ab' style='left:1730px;top:514px;height:11px;line-height:0'><svg width='11' height='11' viewBox='0 0 11 11'><circle cx='5.5' cy='5.5' r='4.7' fill='none' stroke='#555' stroke-width='1.2'/><path d='M5.5 2.8 V5.7 L7.4 6.6' fill='none' stroke='#555' stroke-width='1.1'/></svg></div>
<div class='ab' style='left:1748px;top:511px;height:17px;line-height:17px;font-size:12.75px;color:#444'><span style='letter-spacing:0.008px;'>2025-10-22 11:25:17</span></div>
<div class='ab' style='left:160px;top:539px;width:1715px;height:1px;background:#eef0f3'></div>
<svg class='ab' style='left:0;top:0;overflow:visible' width='1' height='1'><path d='M142 540 L164.7 533.0' stroke='#e8402a' stroke-width='3.4' stroke-linecap='round'/><path d='M178 529 L157 525 L164.7 533.0 L162 544 Z' fill='#e8402a' stroke='#e8402a' stroke-width='0.6' stroke-linejoin='round'/></svg>
<div class='ab' style='left:171px;top:565px;height:16px;line-height:0'><svg width='16' height='16' viewBox='0 0 16 16'><path d='M8 8 L1.07 4 A8 8 0 0 1 14.93 4 Z' fill='#e2382b'/><path d='M8 8 L14.93 4 A8 8 0 0 1 6.6 15.9 Z' fill='#fbbc05'/><path d='M8 8 L6.6 15.9 A8 8 0 0 1 1.07 4 Z' fill='#2a9c48'/><circle cx='8' cy='8' r='3.7' fill='#fff'/><circle cx='8' cy='8' r='3' fill='#1b72e8'/></svg></div>
<div class='ab' style='left:192px;top:561px;height:24px;line-height:24px;font-size:17px;color:#3d6ff0'><span style='letter-spacing:0.163px;'>www.google.com</span></div>
<div class='chip' style='left:334px;top:560px;width:152px'><span style='letter-spacing:-0.053px;'>ip: 120.41.213.185</span></div>
<svg class='ab' style='left:461px;top:564px' width='14' height='14' viewBox='0 0 14 14'><circle cx='7' cy='7' r='6.2' fill='none' stroke='#3d6ff0' stroke-width='1.2'/><path d='M4.6 9.4 L9.2 4.8 M5.6 4.6 H9.4 V8.4' fill='none' stroke='#3d6ff0' stroke-width='1.2'/></svg>
<div class='chip' style='left:498px;top:560px;width:319px'><span style='letter-spacing:0.133px;'>新访客: b7fa900140000973fabc86af93a992ca</span></div>
<svg class='ab' style='left:792px;top:564px' width='14' height='14' viewBox='0 0 14 14'><circle cx='7' cy='7' r='6.2' fill='none' stroke='#3d6ff0' stroke-width='1.2'/><path d='M5.5 4.3 L9.6 7 L5.5 9.7 Z' fill='none' stroke='#3d6ff0' stroke-width='1.2' stroke-linejoin='round'/></svg>
<div class='chip' style='left:828px;top:560px;width:188px'><span style='letter-spacing:0.176px;'>会话ID: 1761103769185</span></div>
<svg class='ab' style='left:991px;top:564px' width='14' height='14' viewBox='0 0 14 14'><circle cx='7' cy='7' r='6.2' fill='none' stroke='#3d6ff0' stroke-width='1.2'/><path d='M5.5 4.3 L9.6 7 L5.5 9.7 Z' fill='none' stroke='#3d6ff0' stroke-width='1.2' stroke-linejoin='round'/></svg>
<div class='ab' style='left:172px;top:596px;height:14px;line-height:0'><svg width='14' height='14' viewBox='0 0 14 14'><path d='M7 0.9 A4.5 4.5 0 0 1 11.5 5.4 C11.5 8 9 10 7 11.4 C5 10 2.5 8 2.5 5.4 A4.5 4.5 0 0 1 7 0.9 Z' fill='none' stroke='#222' stroke-width='1.3'/><circle cx='7' cy='5.4' r='1.7' fill='none' stroke='#222' stroke-width='1.2'/><path d='M3.5 10.3 C1.5 10.9 1 11.5 1 12 C1 12.8 3.8 13.2 7 13.2 C10.2 13.2 13 12.8 13 12 C13 11.5 12.5 10.9 10.5 10.3' fill='none' stroke='#222' stroke-width='1.3'/></svg></div>
<div class='ab' style='left:194px;top:593px;height:20px;line-height:20px;font-size:14px;color:#222'>中国福建省厦门市</div>
<div class='tag' style='left:316px;top:593px;width:96px'><svg width='12' height='11' viewBox='0 0 12 11' style='margin-right:2px;margin-top:-1px'><rect x='0.5' y='0.5' width='11' height='7.6' rx='0.6' fill='none' stroke='#8c8c8c' stroke-width='0.9'/><path d='M2.2 10 H9.8' stroke='#8c8c8c' stroke-width='0.9'/></svg>WINDOWS</div>
<div class='tag' style='left:419px;top:593px;width:127px'>设备尺寸: 1600x900</div>
<div class='tag' style='left:553px;top:593px;width:80px'>chrome_14</div>
<div class='tag' style='left:641px;top:593px;width:139px'>浏览器尺寸: 1600*765</div>
<div class='dv' style='left:792px;top:597px;height:13px'></div>
<div class='tag' style='left:805px;top:593px;width:121px'>响应时长：0.122秒</div>
<div class='tag' style='left:934px;top:593px;width:135px'>访问时长：167.365秒</div>
<div class='tag' style='left:1076px;top:593px;width:121px'>首屏停留：0.000秒</div>
<div class='tag' style='left:1204px;top:593px;width:42px'>离开</div>
<div class='tag' style='left:1253px;top:593px;width:54px'>落地页</div>
<div class='tag' style='left:1314px;top:593px;width:42px'>次新</div>
<div class='tag' style='left:1363px;top:593px;width:113px'>浏览百分比：57%</div>
<div class='ab' style='left:171px;top:624px;height:16px;line-height:0'><svg width='16' height='16' viewBox='0 0 16 16'><defs><linearGradient id='cg' x1='0' y1='0' x2='1' y2='1'><stop offset='0' stop-color='#ffcf6e'/><stop offset='1' stop-color='#fb9b3a'/></linearGradient></defs><circle cx='8' cy='8' r='8' fill='url(#cg)'/><path d='M4 5.8 L6 7.3 L8 4.4 L10 7.3 L12 5.8 L11 10.3 H5 Z' fill='#fff'/><rect x='5.5' y='11.5' width='5' height='0.6' fill='#fff' opacity='0.5'/></svg></div>
<div class='ab tc' style='left:194px;top:624px;width:28px;height:16px;border-radius:2px;background:#f7804e;color:#fff;font-size:11px'>文章</div>
<div class='ab' style='left:229px;top:622px;height:20px;line-height:20px;font-size:14px;color:#3d6ff0'><span style='letter-spacing:-0.040px;'>印度最盛大的排灯节来了！快发这些祝福短语和祝福邮件，赢下印度客户！_AB客</span></div>
<div class='ab tc' style='left:1824px;top:566px;width:42px;height:20px;border-radius:3px;background:#e8f3ff;color:#2f6ef0;font-size:12px'>中文</div>
<div class='ab' style='left:1730px;top:628px;height:11px;line-height:0'><svg width='11' height='11' viewBox='0 0 11 11'><circle cx='5.5' cy='5.5' r='4.7' fill='none' stroke='#555' stroke-width='1.2'/><path d='M5.5 2.8 V5.7 L7.4 6.6' fill='none' stroke='#555' stroke-width='1.1'/></svg></div>
<div class='ab' style='left:1748px;top:625px;height:17px;line-height:17px;font-size:12.75px;color:#444'><span style='letter-spacing:0.008px;'>2025-10-22 11:29:29</span></div>
<div class='ab' style='left:160px;top:653px;width:1715px;height:1px;background:#eef0f3'></div>
<svg class='ab' style='left:0;top:0;overflow:visible' width='1' height='1'><path d='M137 657 L161.3 646.8' stroke='#e8402a' stroke-width='3.4' stroke-linecap='round'/><path d='M175 641 L152 639 L161.3 646.8 L160 659 Z' fill='#e8402a' stroke='#e8402a' stroke-width='0.6' stroke-linejoin='round'/></svg>
<div class='ab' style='left:171px;top:679px;height:16px;line-height:0'><svg width='16' height='16' viewBox='0 0 16 16'><defs><linearGradient id='bg1' x1='0' y1='0' x2='0' y2='1'><stop offset='0' stop-color='#1a8cf0'/><stop offset='1' stop-color='#1140e0'/></linearGradient><linearGradient id='bg2' x1='0' y1='0' x2='1' y2='1'><stop offset='0' stop-color='#18c8ee'/><stop offset='1' stop-color='#3aa0e8'/></linearGradient></defs><circle cx='8' cy='8' r='7.5' fill='none' stroke='#b9e6fb' stroke-width='0.9' stroke-dasharray='1.6 0.9'/><path d='M5.6 3.4 Q5.6 2.6 6.4 2.8 Q7.2 3 7.2 3.8 V11.4 L5.6 12 Z' fill='url(#bg1)'/><path d='M8.6 5.6 Q8.8 5 9.6 5.4 L11.2 6.4 Q12.4 7.4 11.6 9 Q10.6 10.8 8.4 11.8 Q6.4 12.6 5.8 11.6 L9.6 9.2 L8.8 7.8 Z' fill='url(#bg2)'/></svg></div>
<div class='ab' style='left:192px;top:675px;height:24px;line-height:24px;font-size:17px;color:#3d6ff0'><span style='letter-spacing:0.084px;'>cn.bing.com</span></div>
<div class='chip' style='left:295px;top:674px;width:146px'><span style='letter-spacing:0.029px;'>ip: 175.0.224.174</span></div>
<svg class='ab' style='left:416px;top:678px' width='14' height='14' viewBox='0 0 14 14'><circle cx='7' cy='7' r='6.2' fill='none' stroke='#3d6ff0' stroke-width='1.2'/><path d='M4.6 9.4 L9.2 4.8 M5.6 4.6 H9.4 V8.4' fill='none' stroke='#3d6ff0' stroke-width='1.2'/></svg>
<div class='chip' style='left:452px;top:674px;width:323px'><span style='letter-spacing:0.181px;'>新访客: 4ae7659dd29cccfe271d08c5335f908b</span></div>
<svg class='ab' style='left:750px;top:678px' width='14' height='14' viewBox='0 0 14 14'><circle cx='7' cy='7' r='6.2' fill='none' stroke='#3d6ff0' stroke-width='1.2'/><path d='M5.5 4.3 L9.6 7 L5.5 9.7 Z' fill='none' stroke='#3d6ff0' stroke-width='1.2' stroke-linejoin='round'/></svg>
<div class='chip' style='left:785px;top:674px;width:189px'><span style='letter-spacing:0.229px;'>会话ID: 1761103846652</span></div>
<svg class='ab' style='left:949px;top:678px' width='14' height='14' viewBox='0 0 14 14'><circle cx='7' cy='7' r='6.2' fill='none' stroke='#3d6ff0' stroke-width='1.2'/><path d='M5.5 4.3 L9.6 7 L5.5 9.7 Z' fill='none' stroke='#3d6ff0' stroke-width='1.2' stroke-linejoin='round'/></svg>
<div class='ab' style='left:172px;top:710px;height:14px;line-height:0'><svg width='14' height='14' viewBox='0 0 14 14'><path d='M7 0.9 A4.5 4.5 0 0 1 11.5 5.4 C11.5 8 9 10 7 11.4 C5 10 2.5 8 2.5 5.4 A4.5 4.5 0 0 1 7 0.9 Z' fill='none' stroke='#222' stroke-width='1.3'/><circle cx='7' cy='5.4' r='1.7' fill='none' stroke='#222' stroke-width='1.2'/><path d='M3.5 10.3 C1.5 10.9 1 11.5 1 12 C1 12.8 3.8 13.2 7 13.2 C10.2 13.2 13 12.8 13 12 C13 11.5 12.5 10.9 10.5 10.3' fill='none' stroke='#222' stroke-width='1.3'/></svg></div>
<div class='ab' style='left:194px;top:707px;height:20px;line-height:20px;font-size:14px;color:#222'>中国湖南省长沙市</div>
<div class='tag' style='left:316px;top:707px;width:96px'><svg width='12' height='11' viewBox='0 0 12 11' style='margin-right:2px;margin-top:-1px'><rect x='0.5' y='0.5' width='11' height='7.6' rx='0.6' fill='none' stroke='#8c8c8c' stroke-width='0.9'/><path d='M2.2 10 H9.8' stroke='#8c8c8c' stroke-width='0.9'/></svg>WINDOWS</div>
<div class='tag' style='left:419px;top:707px;width:127px'>设备尺寸: 1280x720</div>
<div class='tag' style='left:554px;top:707px;width:59px'>edg_14</div>
<div class='tag' style='left:620px;top:707px;width:139px'>浏览器尺寸: 1272*594</div>
<div class='dv' style='left:771px;top:711px;height:13px'></div>
<div class='tag' style='left:784px;top:707px;width:121px'>响应时长：0.505秒</div>
<div class='tag' style='left:912px;top:707px;width:128px'>访问时长：26.987秒</div>
<div class='tag' style='left:1047px;top:707px;width:121px'>首屏停留：0.339秒</div>
<div class='tag' style='left:1175px;top:707px;width:42px'>离开</div>
<div class='tag' style='left:1224px;top:707px;width:54px'>落地页</div>
<div class='tag' style='left:1285px;top:707px;width:42px'>最新</div>
<div class='tag' style='left:1334px;top:707px;width:115px'>浏览百分比：80%</div>
<div class='ab' style='left:171px;top:738px;height:16px;line-height:0'><svg width='16' height='16' viewBox='0 0 16 16'><defs><linearGradient id='cg' x1='0' y1='0' x2='1' y2='1'><stop offset='0' stop-color='#ffcf6e'/><stop offset='1' stop-color='#fb9b3a'/></linearGradient></defs><circle cx='8' cy='8' r='8' fill='url(#cg)'/><path d='M4 5.8 L6 7.3 L8 4.4 L10 7.3 L12 5.8 L11 10.3 H5 Z' fill='#fff'/><rect x='5.5' y='11.5' width='5' height='0.6' fill='#fff' opacity='0.5'/></svg></div>
<div class='ab tc' style='left:194px;top:738px;width:28px;height:16px;border-radius:2px;background:#f7804e;color:#fff;font-size:11px'>文章</div>
<div class='ab' style='left:229px;top:736px;height:20px;line-height:20px;font-size:14px;color:#3d6ff0'><span style='letter-spacing:-0.221px;'>外贸客户总是不回复，不回应，怎么继续跟进？20个高频场景实操指南！</span></div>
<div class='ab tc' style='left:1824px;top:680px;width:42px;height:20px;border-radius:3px;background:#e8f3ff;color:#2f6ef0;font-size:12px'>中文</div>
<div class='ab' style='left:1730px;top:742px;height:11px;line-height:0'><svg width='11' height='11' viewBox='0 0 11 11'><circle cx='5.5' cy='5.5' r='4.7' fill='none' stroke='#555' stroke-width='1.2'/><path d='M5.5 2.8 V5.7 L7.4 6.6' fill='none' stroke='#555' stroke-width='1.1'/></svg></div>
<div class='ab' style='left:1748px;top:739px;height:17px;line-height:17px;font-size:12.75px;color:#444'><span style='letter-spacing:0.008px;'>2025-10-22 11:31:13</span></div>
<div class='ab' style='left:160px;top:767px;width:1715px;height:1px;background:#eef0f3'></div>
</body></html>
